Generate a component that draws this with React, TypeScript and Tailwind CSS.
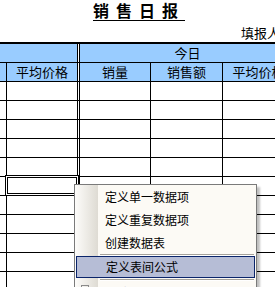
import React from "react";

const font = { fontFamily: '"Noto Sans CJK SC", "Liberation Sans", sans-serif' };

function DataRow() {
  return (
    <div className="flex h-[19px] border-b border-black">
      <div className="w-[7px] shrink-0 border-r border-black" />
      <div className="w-[71px] shrink-0 border-r border-black" />
      <div className="w-[1px] shrink-0" />
      <div className="w-[72px] shrink-0 border-x border-black" />
      <div className="w-[72px] shrink-0 border-r border-black" />
      <div className="w-[72px] shrink-0 border-r border-black" />
    </div>
  );
}

function HeaderCell({ w, label, extra = "" }: { w: string; label: string; extra?: string }) {
  return (
    <div className={`${w} ${extra} shrink-0 flex items-center justify-center whitespace-nowrap overflow-hidden border-black`}>
      {label}
    </div>
  );
}

const menuItems = ["定义单一数据项", "定义重复数据项", "创建数据表"];

export default function App() {
  return (
    <div className="relative w-[275px] h-[287px] overflow-hidden bg-white text-black" style={font}>
      {/* Title */}
      <div className="h-[42px] relative">
        <div className="absolute left-[93px] top-[1px] text-[16px] leading-[18px] font-bold tracking-[7px] border-b border-black pb-[1px]">
          销售日报
        </div>
        <div className="absolute left-[241px] top-[25px] text-[13px] leading-[16px] whitespace-nowrap">填报人</div>
      </div>

      {/* Table */}
      <div className="w-[300px] border-t-2 border-black text-[13px] leading-[16px]">
        <div className="flex h-[19px] border-b border-black bg-[#99ccff]">
          <div className="w-[78px] shrink-0 border-r border-black" />
          <div className="w-[1px] shrink-0 bg-white" />
          <HeaderCell w="w-[216px]" label="今日" extra="border-l" />
        </div>
        <div className="flex h-[19px] border-b border-black bg-[#99ccff]">
          <div className="w-[7px] shrink-0 border-r border-black" />
          <HeaderCell w="w-[71px]" label="平均价格" extra="border-r" />
          <div className="w-[1px] shrink-0 bg-white" />
          <HeaderCell w="w-[72px]" label="销量" extra="border-x" />
          <HeaderCell w="w-[72px]" label="销售额" extra="border-r" />
          <HeaderCell w="w-[72px]" label="平均价格" extra="border-r" />
        </div>
        {Array.from({ length: 11 }).map((_, i) => (
          <DataRow key={i} />
        ))}
      </div>

      {/* Selected cell */}
      <div className="absolute left-[5px] top-[175px] w-[74px] h-[21px] border border-black">
        <div className="w-full h-full border border-white">
          <div className="w-full h-full border border-black" />
        </div>
      </div>

      {/* Context menu */}
      <div className="absolute left-[74px] top-[184px] w-[183px] h-[120px] border border-[#7a7a7a] bg-[#fcfaf5] shadow-[3px_3px_2px_rgba(0,0,0,0.25)] text-[12px] leading-[14px]">
        <div className="absolute left-0 top-0 bottom-0 w-[23px] bg-gradient-to-r from-[#fdfcfa] to-[#dedbd3]" />
        <div className="relative">
          {menuItems.map((t) => (
            <div key={t} className="h-[23px] flex items-center pl-[30px]">
              {t}
            </div>
          ))}
          <div className="ml-[25px] mr-[2px] h-[2px] border-t border-[#a5a29b] bg-white" />
          <div className="mx-[1px] h-[22px] flex items-center pl-[29px] border border-[#0a246a] bg-[#b6bdd6]">
            定义表间公式
          </div>
          <div className="ml-[25px] mr-[2px] mt-[1px] h-[2px] border-t border-[#a5a29b] bg-white" />
          <div className="h-[23px] flex items-center pl-[30px] relative">
            <span className="absolute left-[6px] top-[4px] w-[8px] h-[8px] border border-[#8a8a8a]" />
            删除公式
          </div>
        </div>
      </div>
    </div>
  );
}
